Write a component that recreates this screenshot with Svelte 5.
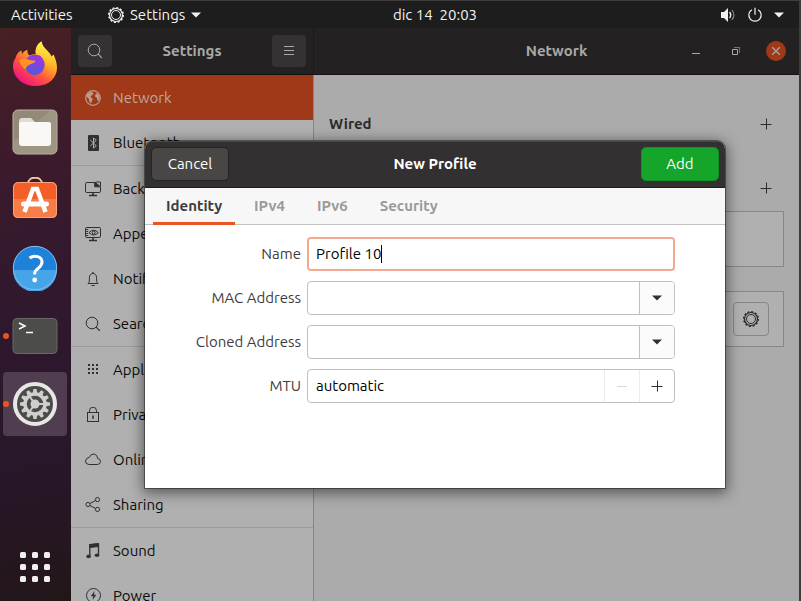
<script>
  const groups = [
    [
      { id: 'network', label: 'Network' },
      { id: 'bluetooth', label: 'Bluetooth' }
    ],
    [
      { id: 'background', label: 'Background' },
      { id: 'appearance', label: 'Appearance' },
      { id: 'notifications', label: 'Notifications' },
      { id: 'search', label: 'Search' }
    ],
    [
      { id: 'applications', label: 'Applications' },
      { id: 'privacy', label: 'Privacy' },
      { id: 'online', label: 'Online Accounts' },
      { id: 'sharing', label: 'Sharing' }
    ],
    [
      { id: 'sound', label: 'Sound' },
      { id: 'power', label: 'Power' }
    ]
  ];
  const tabs = ['Identity', 'IPv4', 'IPv6', 'Security'];
  const grid = [0, 1, 2].flatMap((r) => [0, 1, 2].map((c) => [c, r]));
  const teeth = Array.from({ length: 12 }, (_, i) => i * 30);

  let page = $state('network');
  let tab = $state('Identity');
  let name = $state('Profile 10');
  let mac = $state('');
  let cloned = $state('');
  let mtu = $state('automatic');
</script>

{#snippet cog()}
  <svg width="16" height="16" viewBox="0 0 16 16" fill="none" stroke="currentColor" aria-hidden="true">
    <circle cx="8" cy="8" r="6.5" stroke-width="1.2" />
    <circle cx="8" cy="8" r="4.5" />
    <circle cx="8" cy="8" r="7.3" stroke-width="1.4" stroke-dasharray="2.1 1.722" />
  </svg>
{/snippet}

{#snippet down()}
  <svg width="10" height="6" viewBox="0 0 10 6" fill="currentColor" aria-hidden="true"><path d="M0 .5h10L5 5.5z" /></svg>
{/snippet}

{#snippet plus()}
  <svg width="12" height="12" viewBox="0 0 12 12" stroke="currentColor" aria-hidden="true"><path d="M.5 6.5h11M6.5.5v11" /></svg>
{/snippet}

{#snippet lens()}
  <svg width="16" height="16" viewBox="0 0 16 16" fill="none" stroke="currentColor" aria-hidden="true">
    <circle cx="7" cy="7" r="5.8" /><path d="M11.2 11.2l3.6 3.6" stroke-width="1.2" />
  </svg>
{/snippet}

{#snippet navIcon(id)}
  {#if id === 'search'}
    {@render lens()}
  {:else}
    <svg width="16" height="16" viewBox="0 0 16 16" fill="none" stroke="currentColor" aria-hidden="true">
      {#if id === 'network'}
        <circle cx="8" cy="8" r="7.3" stroke-width="1.2" />
        <path d="M2 4.4L4.8 2l2.8.3 1 1.5L7 5.3 5.5 6.2l.8 1.5 1.5 1.2-1 2.3-.9 2.6-1.6-2.2-.4-2.7L2.2 7.3 1.4 6zM10 2.4l2.6 1 1.6 2.4.5 2.6-1.2 2.7-1.2-.8-.4-2.6-1.7-.9-.2-1.9 1.7-1.2z" fill="currentColor" stroke="none" />
      {:else if id === 'bluetooth'}
        <rect x="3" y="0" width="11" height="16" rx="1" fill="currentColor" stroke="none" />
        <path d="M5.3 5l6 5.800L8.500 13V3l2.800 2.300-6 5.700" stroke="#b0b0b0" />
      {:else if id === 'background'}
        <path d="M9.5 1.5H1.8Q.5 1.5.5 2.8v7.4q0 1.3 1.3 1.3h12.4q1.3 0 1.3-1.3V6" />
        <path d="M8 12v2M4 14.5h8" stroke-width="1.6" />
        <path d="M9.7 1v4.8h5.8z" fill="currentColor" /><path d="M11 1h4.5v4" />
      {:else if id === 'appearance'}
        <rect x=".5" y="1.5" width="15" height="10" rx="1.3" />
        <path d="M8 12v2M4 14.5h8" stroke-width="1.6" /><path d="M2.2 3v8" stroke-width="2" stroke-dasharray="1 1" />
        <path d="M4 6.7q4.6-5 9.3 0-4.7 4.6-9.3 0z" /><circle cx="8.7" cy="6.6" r="1.5" />
      {:else if id === 'notifications'}
        <path d="M3 12.5c1.3-1.3 1.4-2.3 1.4-5.7C4.4 4 6 2.5 8 2.5s3.6 1.5 3.6 4.3c0 3.4.1 4.4 1.4 5.7z" />
        <path d="M8 1v1.5M6.5 14.5h3" stroke-width="1.2" />
      {:else if id === 'applications'}
        {#each grid as [c, r]}
          <rect x={3 + c * 4} y={2 + r * 4} width="2" height="2" fill="currentColor" stroke="none" />
        {/each}
      {:else if id === 'privacy'}
        <rect x="2.5" y="5.5" width="11" height="9" /><path d="M4.5 5.5V3.7a3.5 3.5 0 0 1 7 0v1.8" /><path d="M8 8.5v3.200" stroke-width="1.6" />
      {:else if id === 'online'}
        <path d="M3.8 12.500h8.700q3-.3 3-3t-2.700-2.800Q12.400 2.500 9 2 5.500 1.800 4.400 5.300 1 5.600.5 9q0 3.200 3.300 3.500z" />
      {:else if id === 'sharing'}
        <circle cx="3" cy="7.500" r="2.100" /><circle cx="12.500" cy="2.600" r="2.100" /><circle cx="12.500" cy="12.400" r="2.100" />
        <path d="M4.900 6.500l5.700-3M4.900 8.500l5.700 3" />
      {:else if id === 'sound'}
        <path d="M4.800 13V1.800L13.500 1v11" stroke-width="1.300" /><path d="M4.800 1.500L13.500.5v3l-8.700 1z" fill="currentColor" />
        <ellipse cx="3.600" cy="13.400" rx="2.300" ry="1.800" fill="currentColor" stroke="none" /><ellipse cx="12" cy="12.200" rx="2.300" ry="1.800" fill="currentColor" stroke="none" />
      {:else if id === 'power'}
        <circle cx="8.500" cy="7.500" r="7" /><path d="M9.500 3L5.800 8.300h2.300L7.700 12l3.500-5.200H9z" fill="currentColor" stroke="none" />
      {/if}
    </svg>
  {/if}
{/snippet}

<div class="desktop">
  <header class="topbar">
    <button class="activities">Activities</button>
    <button class="appmenu">{@render cog()}<span>Settings</span>{@render down()}</button>
    <time class="clock">dic 14&nbsp; 20:03</time>
    <button class="status" aria-label="System menu">
      <svg width="16" height="16" viewBox="0 0 16 16" fill="none" stroke="currentColor" aria-hidden="true">
        <path d="M1 5h3l4-4v14l-4-4H1z" fill="currentColor" stroke="none" /><path d="M9.600 5q2.200 3 0 6" stroke-width="1.400" /><path d="M12 3q3.800 5 0 10" opacity=".5" stroke-width="1.200" />
      </svg>
      <svg width="16" height="16" viewBox="0 0 16 16" fill="none" stroke="currentColor" stroke-width="1.200" aria-hidden="true">
        <path d="M4.800 2.700a6.200 6.200 0 1 0 6.400 0M8 .8v7" />
      </svg>
      {@render down()}
    </button>
  </header>

  <div class="workspace">
    <nav class="dock" aria-label="Dock">
      <button aria-label="Firefox">
        <svg width="46" height="46" viewBox="0 0 46 46">
          <defs>
            <linearGradient id="flame" x1=".85" y1=".1" x2=".25" y2=".95">
              <stop offset="0" stop-color="#fff04a" /><stop offset=".35" stop-color="#ffac22" /><stop offset=".65" stop-color="#ff5540" /><stop offset="1" stop-color="#f01480" />
            </linearGradient>
            <linearGradient id="tail" x1=".5" y1="0" x2=".4" y2="1">
              <stop offset="0" stop-color="#fff44f" /><stop offset=".5" stop-color="#ffc02c" /><stop offset="1" stop-color="#ff5d3a" stop-opacity="0" />
            </linearGradient>
            <linearGradient id="orb" x1=".7" y1="0" x2=".4" y2="1">
              <stop offset="0" stop-color="#a430e8" /><stop offset="1" stop-color="#4f5bd8" />
            </linearGradient>
          </defs>
          <path d="M3.500 17c1-4 3-6.500 6-7.500l.5 3.500c1.500-2 3-3.500 5.500-4.200-.5 2.500.5 4.700 2 5.700 2-1 4.500-1.500 6.500-1.300C22.500 8 26 2 29.500.5 30 4 32 6.500 35 9.500c2 2 3.500 3.500 4.500 6l2-2C44 19 46 25 44.500 31 42 40 34 45 23.500 45 11 45 1 37 1 25c0-3 1-6 2.500-8z" fill="url(#flame)" />
          <path d="M24 13.200C22.500 8 26 2 29.500.5 30 4 32 6.500 35 9.500c7 7 8 18 2 25-4 4-9 5-14 4 9-1 13-8 11-16-1.500-5-5-8-10-9.300z" fill="url(#tail)" />
          <path d="M14 19c2-5 9-6.500 13.500-4.500 1.500.7 3 2.500 3.500 4 1.500 2 1.800 4.500 1.500 6.500-.7 5-4.700 9-9.700 9-5.300 0-9.500-4.200-9.500-9.500 0-2 .2-4 .7-5.500z" fill="url(#orb)" />
          <path d="M7 18.500c4-1.500 7-.8 10 .3 2 .7 4 .8 6.500.9-.5 2.300-3.500 2.600-5.500 3.600-2.500 1.200-4 2.700-4.500 5.200-3-2-5-5-6.500-10z" fill="#ff9520" />
        </svg>
      </button>
      <button aria-label="Files">
        <svg width="46" height="46" viewBox="0 0 46 46">
          <rect x="1" y="1" width="44" height="44" rx="5" fill="#928977" stroke="#bdb6a5" /><path d="M1.500 43V33L38 1.500h5q2 0 2 3V40q0 4.500-4 4.500H4z" fill="#aaa28f" opacity=".5" />
          <path d="M7 13q0-4 3-4h9l4 4h14q2 0 2 3v16H7z" fill="#e1ddd2" /><rect x="7" y="13" width="32" height="24" rx="3" fill="#f9f8f6" /><path d="M7 16v-2h14l3-1v3z" fill="#f9f8f6" />
        </svg>
      </button>
      <button aria-label="Software">
        <svg width="46" height="46" viewBox="0 0 46 46">
          <path d="M16 6C16-2.500 30-2.500 30 6" fill="none" stroke="#efc69c" stroke-width="2" transform="translate(0 1)" /><rect x="1" y="5" width="44" height="36" rx="5" fill="#f35f26" /><path d="M1 22h44v14q0 5-5 5H6q-5 0-5-5z" fill="#f67c48" />
          <rect x="1.500" y="5.500" width="43" height="35" rx="5" fill="none" stroke="#f9a27b" />
          <path d="M12.500 35L21 12h4l8.500 23" fill="none" stroke="#fff" stroke-width="4.500" /><rect x="9" y="24.500" width="28" height="5" rx="2.500" fill="#fff" />
        </svg>
      </button>
      <button aria-label="Help">
        <svg width="46" height="46" viewBox="0 0 46 46">
          <circle cx="23" cy="23" r="22" fill="#1f82da" /><path d="M1 25h44a22 22 0 0 1-44 0z" fill="#47a4e6" /><circle cx="23" cy="23" r="21.700" fill="none" stroke="#83bdea" />
          <path d="M17.500 13c5-3.500 12.500-1.500 12.500 4 0 6-7.300 6.500-7.300 11.500v1" fill="none" stroke="#fff" stroke-width="3" /><circle cx="22.700" cy="35" r="2.400" fill="#fff" />
        </svg>
      </button>
      <button class="running" aria-label="Terminal">
        <svg width="46" height="46" viewBox="0 0 46 46">
          <rect x="1" y="5.500" width="44" height="35" rx="4" fill="#4c4c4a" stroke="#686866" /><path d="M7 10l6 3-6 3" fill="none" stroke="#fff" stroke-width="1.500" /><path d="M14 19.500h7" stroke="#fff" stroke-width="1.500" />
        </svg>
      </button>
      <button class="running active" aria-label="Settings">
        <svg width="46" height="46" viewBox="0 0 46 46">
          <circle cx="23" cy="23" r="20" fill="#4b4b49" stroke="#e7e7e6" stroke-width="4" />
          {#each teeth as a}
            <path d="M21.500 8h3l.8 4h-4.600z" fill="#cfcfcd" transform="rotate({a} 23 23)" />
          {/each}
          <circle cx="23" cy="23" r="10" fill="none" stroke="#cfcfcd" stroke-width="3.500" />
          <circle cx="23" cy="23" r="4.500" fill="#cfcfcd" /><path d="M23 23l-5-7M23 23l-5 7M23 23h9" stroke="#cfcfcd" stroke-width="2" />
        </svg>
      </button>
      <button class="apps" aria-label="Show Applications">
        <svg width="30" height="30" viewBox="0 0 30 30" fill="#f0f0ef">
          {#each grid as [c, r]}
            <rect x={c * 12} y={r * 12} width="6" height="6" rx="1.500" />
          {/each}
        </svg>
      </button>
    </nav>

    <main class="window">
      <aside class="side">
        <div class="bar side-bar">
          <button class="tool" aria-label="Search">{@render lens()}</button>
          <h1>Settings</h1>
          <button class="tool" aria-label="Menu">
            <svg width="10" height="10" viewBox="0 0 10 10" stroke="currentColor"><path d="M0 .5h10M0 4.500h10M0 8.500h10" /></svg>
          </button>
        </div>
        <nav class="list" aria-label="Settings panels">
          {#each groups as group}
            <div class="group">
              {#each group as item}
                <button class="row" class:selected={page === item.id} onclick={() => (page = item.id)}>
                  {@render navIcon(item.id)}<span>{item.label}</span>
                </button>
              {/each}
            </div>
          {/each}
        </nav>
      </aside>

      <section class="content">
        <div class="bar content-bar">
          <h2>Network</h2>
          <div class="controls">
            <button aria-label="Minimize"><svg width="8" height="8" viewBox="0 0 8 8" stroke="currentColor"><path d="M0 6.500h8" /></svg></button>
            <button aria-label="Restore"><svg width="8" height="8" viewBox="0 0 8 8" fill="none" stroke="currentColor"><path d="M.5 2.500h5v5h-5z" /><path d="M2 .5h5.500V6" opacity=".6" /></svg></button>
            <button class="close" aria-label="Close"><svg width="8" height="8" viewBox="0 0 8 8" stroke="currentColor" stroke-width="1.300"><path d="M0 0l8 8M8 0L0 8" /></svg></button>
          </div>
        </div>
        <div class="panel">
          <div class="section-head"><h3>Wired</h3><button aria-label="Add wired profile">{@render plus()}</button></div>
          <div class="section-head vpn"><button aria-label="Add VPN">{@render plus()}</button></div>
          <div class="card"></div>
          <div class="card proxy"><button aria-label="Proxy settings">{@render cog()}</button></div>
        </div>
      </section>

      <div class="overlay">
        <form class="dialog" role="dialog" aria-labelledby="dialog-title" onsubmit={(e) => e.preventDefault()}>
          <div class="dialog-bar">
            <button type="button" class="cancel">Cancel</button>
            <h2 id="dialog-title">New Profile</h2>
            <button class="add">Add</button>
          </div>
          <div class="tabs" role="tablist">
            {#each tabs as t}
              <button type="button" role="tab" aria-selected={tab === t} onclick={() => (tab = t)}>{t}</button>
            {/each}
          </div>
          <div class="fields">
            <label for="name">Name</label>
            <div class="entry focused"><input id="name" class="fit" bind:value={name} /><span class="caret"></span></div>
            <label for="mac">MAC Address</label>
            <div class="entry"><input id="mac" bind:value={mac} /><button type="button" class="drop" aria-label="Choose MAC address">{@render down()}</button></div>
            <label for="cloned">Cloned Address</label>
            <div class="entry"><input id="cloned" bind:value={cloned} /><button type="button" class="drop" aria-label="Choose cloned address">{@render down()}</button></div>
            <label for="mtu">MTU</label>
            <div class="entry">
              <input id="mtu" bind:value={mtu} />
              <button type="button" class="step" disabled aria-label="Decrease MTU"><svg width="10" height="12" viewBox="0 0 10 12" stroke="currentColor"><path d="M0 6.500h10" /></svg></button>
              <button type="button" class="step" aria-label="Increase MTU">{@render plus()}</button>
            </div>
          </div>
        </form>
      </div>
    </main>
  </div>
</div>

<style>
  :global(body) { background: #3d3d3d; }
  * { box-sizing: border-box; }
  .desktop {
    --dock: 71px;
    display: flex;
    flex-direction: column;
    height: 100vh;
    overflow: hidden;
    border-right: 2px solid #3d3d3d;
    font: 15px/20px Ubuntu, "Noto Sans", "Open Sans", sans-serif;
  }
  svg { display: block; flex: none; }
  h1, h2, h3 { margin: 0; font-size: 15px; line-height: 20px; font-weight: 700; }
  button { border: 0; padding: 0; background: none; color: inherit; font: inherit; display: flex; align-items: center; justify-content: center; }

  .topbar {
    display: grid;
    grid-template-columns: var(--dock) 1fr auto 1fr;
    align-items: center;
    height: 28px;
    flex: none;
    border-top: 1px solid #3d3d3d;
    background: #1d1d1d;
    color: #f2f2f2;
  }
  .activities { justify-self: start; padding-left: 11px; white-space: nowrap; }
  .appmenu { justify-self: start; padding-left: 37px; gap: 6px; }
  .status { justify-self: end; padding-right: 15px; gap: 11px; }

  .workspace { display: flex; flex: 1; min-height: 0; }
  .dock {
    display: flex;
    flex-direction: column;
    gap: 4px;
    width: var(--dock);
    flex: none;
    padding: 4px 4px 2px 3px;
    background: linear-gradient(170deg, #482023, #3b1a2c 25%, #30182e 50%, #28172a 75%, #231619);
  }
  .dock button { position: relative; height: 64px; flex: none; border-radius: 4px; }
  .dock .active { background: #503e50; }
  .dock .running::before { content: ""; position: absolute; left: 0; width: 6px; height: 6px; border-radius: 50%; background: #e95420; }
  .dock .apps { margin-top: auto; }

  .window { position: relative; display: flex; flex: 1; min-width: 0; }
  .bar { height: 47px; flex: none; background: #242122; border-bottom: 1px solid #151314; color: #aaa8a7; align-items: center; }
  .side { display: flex; flex-direction: column; width: 243px; flex: none; background: #b0b0b0; }
  .side-bar { display: flex; justify-content: space-between; padding: 0 7px; border-right: 1px solid #1b1919; }
  .tool { width: 34px; height: 32px; border-radius: 4px; background: #343232; }
  .list { flex: 1; min-height: 0; overflow: hidden; border-right: 1px solid #878787; }
  .group + .group { border-top: 1px solid #9a9a9a; }
  .row { width: 100%; height: 45px; justify-content: flex-start; gap: 12px; padding-left: 14px; color: #303030; }
  .row span { color: #0c0c0c; }
  .row.selected { background: #a03917; color: #bf9a8d; }
  .row.selected span { color: #c1a69d; }

  .content { display: flex; flex-direction: column; flex: 1; min-width: 0; background: #ababab; color: #2b2b2b; }
  .content-bar { display: grid; grid-template-columns: 1fr auto 1fr; padding: 0 13px; }
  .content-bar h2 { grid-column: 2; }
  .controls { display: flex; justify-content: flex-end; gap: 20px; }
  .controls button { width: 20px; height: 20px; border-radius: 50%; }
  .controls .close { background: #a03917; }
  .panel { padding: 32px 15px 0; }
  .section-head { display: flex; align-items: center; justify-content: space-between; height: 34px; }
  .section-head button { width: 36px; height: 34px; margin-left: auto; }
  .vpn { margin: 30px 0 6px; }
  .card { height: 56px; border: 1px solid #868686; background: #b0b0b0; }
  .proxy { display: flex; align-items: center; justify-content: flex-end; margin-top: 24px; padding-right: 14px; }
  .proxy button { width: 36px; height: 34px; border: 1px solid #868686; border-radius: 4px; }

  .overlay { position: absolute; inset: 0; display: grid; place-items: center; }
  .dialog {
    width: 580px;
    max-width: 100%;
    border-radius: 8px 8px 0 0;
    overflow: hidden;
    background: #fff;
    color: #3d3d3d;
    box-shadow: 0 0 0 1px rgba(0, 0, 0, 0.4), 0 3px 14px 2px rgba(0, 0, 0, 0.5);
  }
  .dialog-bar {
    display: grid;
    grid-template-columns: 1fr auto 1fr;
    align-items: center;
    height: 47px;
    padding: 0 6px;
    background: #323030;
    border-bottom: 1px solid #1d1b1b;
    box-shadow: inset 0 1px #4a4848;
    color: #fff;
  }
  .cancel { justify-self: start; width: 78px; height: 34px; border: 1px solid #262424; border-radius: 5px; background: #484745; }
  .add { justify-self: end; width: 78px; height: 34px; border: 1px solid #109324; border-radius: 5px; background: #14a52a; }
  .tabs { display: flex; gap: 6px; height: 37px; padding: 0 8px; background: #f7f7f7; box-shadow: inset 0 -1px #c4c2c1; }
  .tabs button { padding: 2px 13px 0; border-bottom: 3px solid transparent; font-weight: 700; color: #9a9a99; }
  .tabs button[aria-selected="true"] { border-color: #e95420; color: #3d3d3d; }
  .fields { display: grid; grid-template-columns: 156px 1fr; gap: 10px 6px; align-items: center; padding: 12px 50px 85px 0; }
  .fields label { text-align: right; }
  .entry { display: flex; align-items: center; height: 34px; border: 1px solid #c2c0bf; border-radius: 4px; overflow: hidden; }
  .entry input { flex: 1; min-width: 0; border: 0; outline: 0; padding: 0 8px; background: none; font: inherit; color: #000; }
  .focused { border: 2px solid #f4aa90; padding-left: 7px; }
  .entry .fit { flex: none; field-sizing: content; padding: 0; }
  .caret { width: 1px; height: 18px; background: #000; }
  .drop { width: 35px; height: 100%; border-left: 1px solid #c2c0bf; background: #fbfbfb; color: #303030; }
  .step { width: 35px; height: 100%; border-left: 1px solid #ececec; color: #303030; }
  .step:disabled { color: #d8d8d8; }
</style>
